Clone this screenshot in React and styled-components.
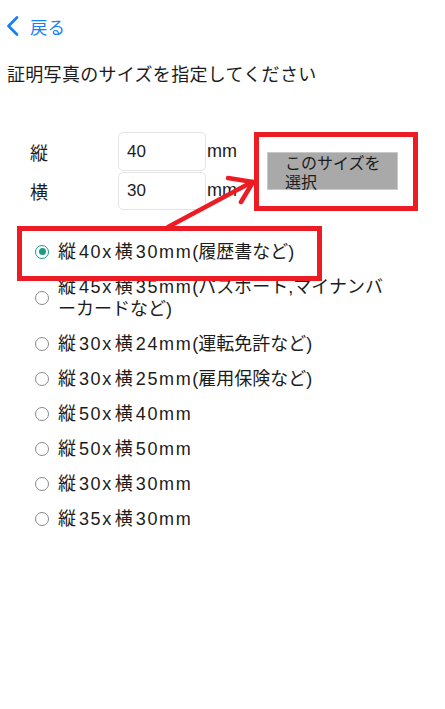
import React from "react";
import styled, { createGlobalStyle } from "styled-components";

const GlobalStyle = createGlobalStyle`
  html, body {
    margin: 0;
    padding: 0;
    background: #ffffff;
  }
  body {
    font-family: "Liberation Sans", "Noto Sans CJK JP", sans-serif;
    color: #1c1c1c;
  }
`;

const Page = styled.div`
  position: relative;
  width: 445px;
  height: 709px;
  overflow: hidden;
`;

const NavBar = styled.div`
  height: 52px;
  display: flex;
  align-items: center;
  gap: 11px;
  padding-left: 5px;
  color: #1a7ff5;
  font-size: 17.5px;
`;

const Title = styled.h1`
  margin: 10px 0 0 7px;
  font-size: 18px;
  font-weight: 400;
  line-height: 26px;
  letter-spacing: 0.3px;
`;

const SizeForm = styled.div`
  display: grid;
  grid-template-columns: 88px 88px 61px 131px;
  grid-template-rows: 39px 39px;
  margin-top: 44px;
  padding-left: 30px;
  align-items: center;
`;

const FieldLabel = styled.span`
  font-size: 18px;
`;

const SizeInput = styled.input`
  box-sizing: border-box;
  width: 88px;
  height: ${(p) => p.$h}px;
  align-self: ${(p) => (p.$first ? "start" : "end")};
  border: 1px solid #e4e4e4;
  border-radius: 5px;
  padding: 0 8px;
  font-family: "Liberation Sans", sans-serif;
  font-size: 17px;
  color: #1c1c1c;
  outline: none;
`;

const Unit = styled.span`
  font-size: 18px;
  padding-left: 1px;
`;

const SelectButton = styled.button`
  grid-column: 4;
  grid-row: 1 / span 2;
  align-self: center;
  box-sizing: border-box;
  width: 131px;
  height: 38px;
  margin: 0;
  padding: 1px 10px 0 17px;
  border: 1px solid #c9c9c9;
  background: #a9a9a9;
  text-align: left;
  font-family: "Liberation Sans", "Noto Sans CJK JP", sans-serif;
  font-size: 16px;
  line-height: 19px;
  color: #1c1c1c;
  overflow: visible;
`;

const OptionList = styled.ul`
  list-style: none;
  margin: 24px 0 0 0;
  padding: 0 47px 0 35px;
`;

const OptionItem = styled.li`
  display: flex;
  align-items: center;
  gap: 9px;
  padding: 6.5px 0;
  font-size: 18px;
  line-height: 22px;
`;

const Latin = styled.span`
  letter-spacing: 1.6px;
  margin-left: ${(p) => (p.$gapLeft ? 3 : 0)}px;
  margin-right: ${(p) => (p.$gapRight ? 2 : 0)}px;
`;

const Radio = styled.span`
  flex: 0 0 14px;
  box-sizing: border-box;
  width: 14px;
  height: 14px;
  border-radius: 50%;
  border: 1.5px solid ${(p) => (p.$checked ? "#1e9a84" : "#8a8a8a")};
  display: flex;
  align-items: center;
  justify-content: center;
  &::after {
    content: "";
    width: 7px;
    height: 7px;
    border-radius: 50%;
    background: ${(p) => (p.$checked ? "#1e9a84" : "transparent")};
  }
`;

const Annotations = styled.svg`
  position: absolute;
  left: 0;
  top: 0;
  pointer-events: none;
`;

const options = [
  "縦40x横30mm(履歴書など)",
  "縦45x横35mm(パスポート,マイナンバーカードなど)",
  "縦30x横24mm(運転免許など)",
  "縦30x横25mm(雇用保険など)",
  "縦50x横40mm",
  "縦50x横50mm",
  "縦30x横30mm",
  "縦35x横30mm",
];

const isCjk = (ch) => !!ch && /[\u3000-\u9fff\uff00-\uffef]/.test(ch);

// wrap alphanumeric runs so they get the wider spacing seen on iOS
function OptionText({ text }) {
  const parts = text.split(/([0-9A-Za-z]+)/);
  return (
    <span>
      {parts.map((part, i) => {
        if (!/^[0-9A-Za-z]+$/.test(part)) return part;
        const before = parts[i - 1] ? parts[i - 1].slice(-1) : "";
        const after = parts[i + 1] ? parts[i + 1][0] : "";
        return (
          <Latin key={i} $gapLeft={isCjk(before)} $gapRight={isCjk(after)}>
            {part}
          </Latin>
        );
      })}
    </span>
  );
}

function BackChevron() {
  return (
    <svg width="14" height="22" viewBox="0 0 14 22">
      <path d="M12 2.5 L3.5 11 L12 19.5" fill="none" stroke="#1a7ff5" strokeWidth="2.8" strokeLinecap="round" strokeLinejoin="round" />
    </svg>
  );
}

export default function App() {
  return (
    <Page>
      <GlobalStyle />
      <NavBar>
        <BackChevron />
        <span>戻る</span>
      </NavBar>
      <Title>証明写真のサイズを指定してください</Title>

      <SizeForm>
        <FieldLabel>縦</FieldLabel>
        <SizeInput $first $h={39} defaultValue="40" />
        <Unit>mm</Unit>
        <SelectButton>このサイズを選択</SelectButton>
        <FieldLabel>横</FieldLabel>
        <SizeInput $h={38} defaultValue="30" />
        <Unit>mm</Unit>
      </SizeForm>

      <OptionList>
        {options.map((o, i) => (
          <OptionItem key={o}>
            <Radio $checked={i === 0} />
            <OptionText text={o} />
          </OptionItem>
        ))}
      </OptionList>

      <Annotations width="445" height="709" viewBox="0 0 445 709">
        <rect x="19.5" y="228.5" width="300" height="50" fill="none" stroke="#ec1c24" strokeWidth="5" />
        <rect x="256.5" y="134.5" width="159" height="74" fill="none" stroke="#ec1c24" strokeWidth="5" />
        <g stroke="#ec1c24" strokeWidth="4.5" strokeLinecap="round" fill="none">
          <line x1="168" y1="227" x2="252" y2="182" />
          <line x1="228" y1="178" x2="253" y2="182" />
          <line x1="241" y1="202" x2="253" y2="182" />
        </g>
      </Annotations>
    </Page>
  );
}
